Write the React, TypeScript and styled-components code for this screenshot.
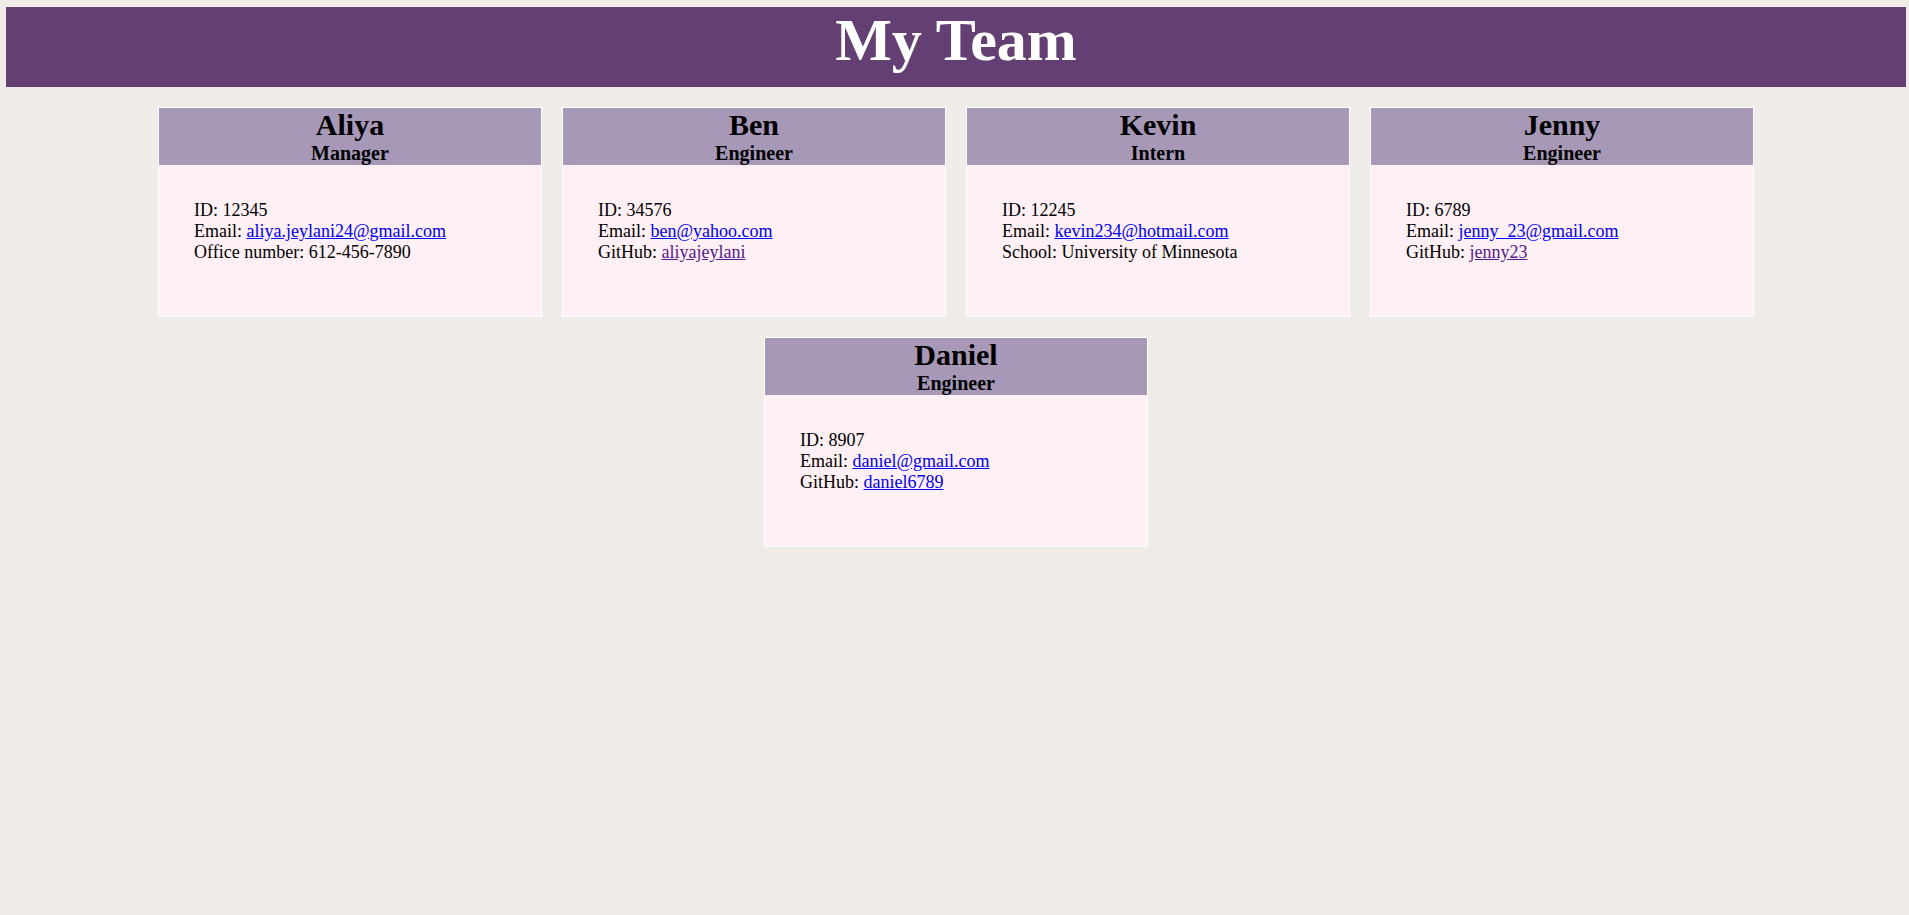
import React from "react";
import styled, { createGlobalStyle } from "styled-components";

const GlobalStyle = createGlobalStyle`
  html, body {
    margin: 0;
    padding: 0;
    background: #efece7;
    font-family: "Liberation Serif", "Times New Roman", serif;
    color: #000;
  }
  #root {
    min-height: 100vh;
  }
`;

const Page = styled.div`
  padding: 7px 3px 0 6px;
`;

const Banner = styled.header`
  background: #633f73;
  height: 80px;
  box-sizing: border-box;
  display: flex;
  justify-content: center;
`;

const Title = styled.h1`
  margin: 0;
  color: #ffffff;
  font-size: 60px;
  font-weight: 700;
  line-height: 67px;
`;

const Team = styled.main`
  display: flex;
  flex-wrap: wrap;
  justify-content: center;
  gap: 20px 20px;
  margin-top: 20px;
`;

const Card = styled.section`
  width: 384px;
  box-sizing: border-box;
  border: 1px solid #ffffff;
  background: #fff0f5;
  display: flex;
  flex-direction: column;
`;

const CardHead = styled.div`
  background: #a798b8;
  height: 57px;
  text-align: center;
`;

const Name = styled.h2`
  margin: 0;
  font-size: 30px;
  line-height: 34px;
  font-weight: 700;
`;

const Role = styled.h3`
  margin: 0;
  font-size: 20px;
  line-height: 23px;
  font-weight: 700;
`;

const CardBody = styled.ul`
  list-style: none;
  margin: 0;
  height: 151px;
  box-sizing: border-box;
  padding: 35px 20px 0 35px;
  font-size: 18px;
  line-height: 21px;
`;

const Item = styled.li`
  margin: 0;
`;

const Link = styled.a<{ $visited?: boolean }>`
  color: ${(p) => (p.$visited ? "#551a8b" : "#0000ee")};
  text-decoration: underline;
`;

type Member = {
  name: string;
  role: string;
  id: string;
  email: string;
  extra:
    | { kind: "office"; value: string }
    | { kind: "github"; value: string; visited?: boolean }
    | { kind: "school"; value: string };
};

const members: Member[] = [
  {
    name: "Aliya",
    role: "Manager",
    id: "12345",
    email: "aliya.jeylani24@gmail.com",
    extra: { kind: "office", value: "612-456-7890" },
  },
  {
    name: "Ben",
    role: "Engineer",
    id: "34576",
    email: "ben@yahoo.com",
    extra: { kind: "github", value: "aliyajeylani", visited: true },
  },
  {
    name: "Kevin",
    role: "Intern",
    id: "12245",
    email: "kevin234@hotmail.com",
    extra: { kind: "school", value: "University of Minnesota" },
  },
  {
    name: "Jenny",
    role: "Engineer",
    id: "6789",
    email: "jenny_23@gmail.com",
    extra: { kind: "github", value: "jenny23", visited: true },
  },
  {
    name: "Daniel",
    role: "Engineer",
    id: "8907",
    email: "daniel@gmail.com",
    extra: { kind: "github", value: "daniel6789" },
  },
];

function Extra({ extra }: { extra: Member["extra"] }) {
  if (extra.kind === "office") return <Item>Office number: {extra.value}</Item>;
  if (extra.kind === "school") return <Item>School: {extra.value}</Item>;
  return (
    <Item>
      GitHub:{" "}
      <Link href={`#github-${extra.value}`} $visited={extra.visited}>
        {extra.value}
      </Link>
    </Item>
  );
}

export default function App() {
  return (
    <>
      <GlobalStyle />
      <Page>
        <Banner>
          <Title>My Team</Title>
        </Banner>
        <Team>
          {members.map((m) => (
            <Card key={m.name}>
              <CardHead>
                <Name>{m.name}</Name>
                <Role>{m.role}</Role>
              </CardHead>
              <CardBody>
                <Item>ID: {m.id}</Item>
                <Item>
                  Email: <Link href={`mailto:${m.email}`}>{m.email}</Link>
                </Item>
                <Extra extra={m.extra} />
              </CardBody>
            </Card>
          ))}
        </Team>
      </Page>
    </>
  );
}
